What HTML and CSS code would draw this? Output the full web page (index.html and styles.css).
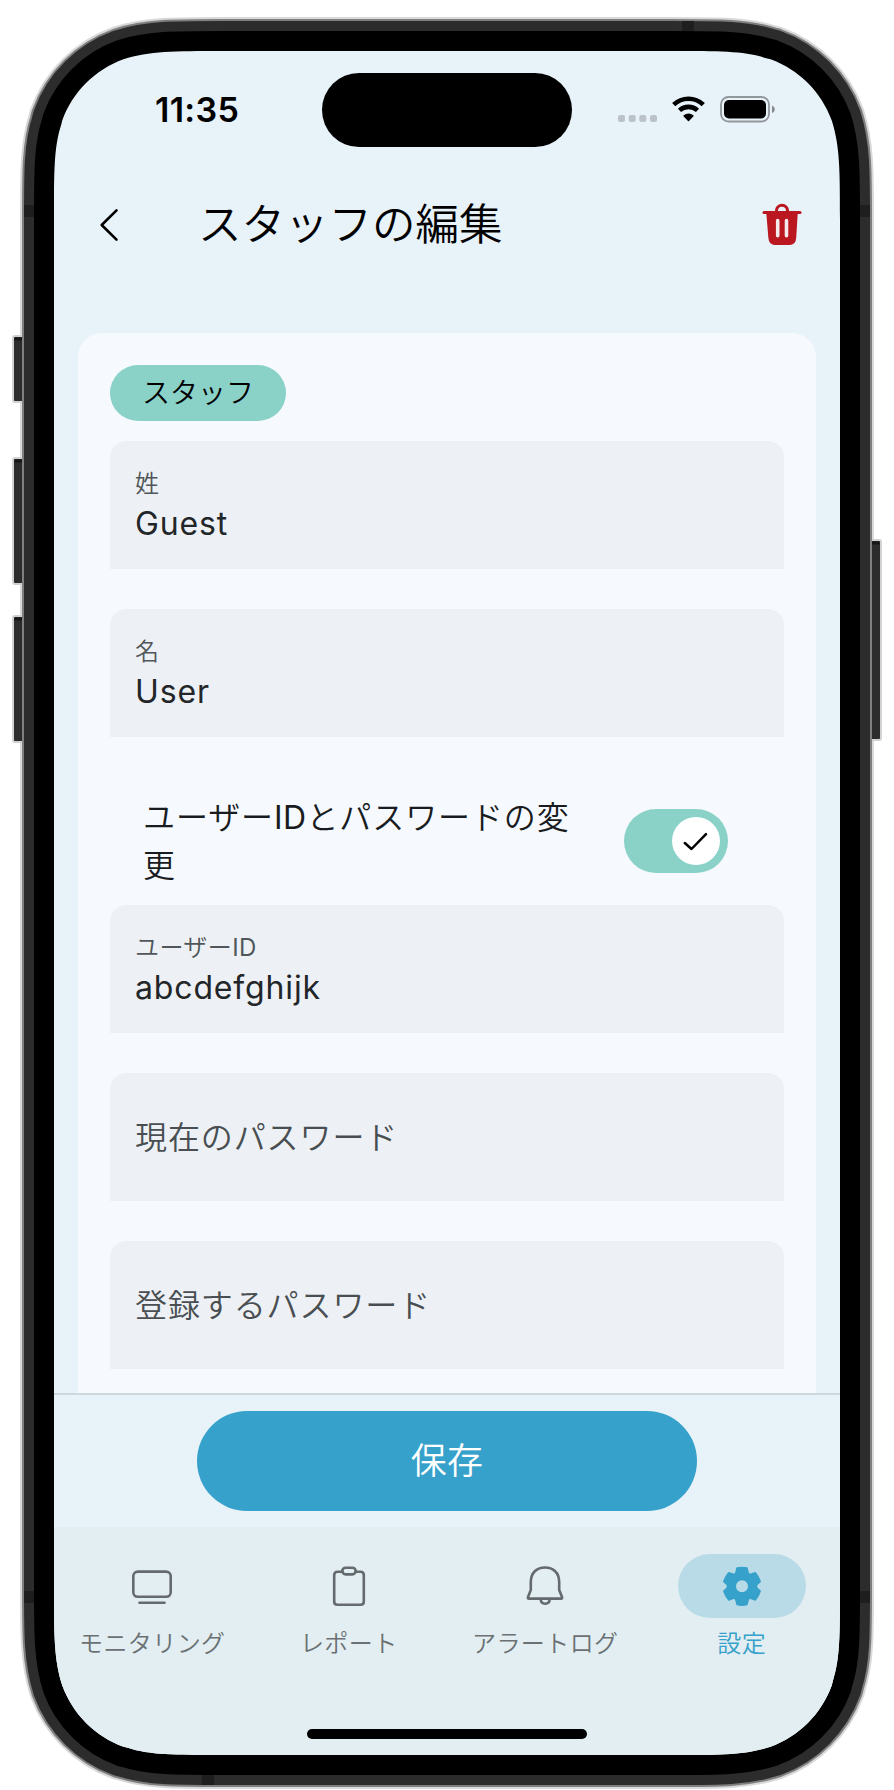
FILE: index.html
```html
<!DOCTYPE html>
<html lang="ja">
<head>
<meta charset="utf-8">
<title>スタッフの編集</title>
<link rel="stylesheet" href="styles.css">
</head>
<body>
<div class="device">
  <svg class="frame" viewBox="0 0 894 1790" aria-hidden="true">
    <defs>
      <path id="outline" transform="translate(54 51)" d="M168.15 0H617.85C666.27 0 690.48 0 712.31 7.2L716.54 8.24C744.99 18.6 767.4 41.01 777.76 69.46C786 95.52 786 119.73 786 168.15V1535.85C786 1584.27 786 1608.48 778.8 1630.31L777.76 1634.54C767.4 1662.99 744.99 1685.4 716.54 1695.76C690.48 1704 666.27 1704 617.85 1704H168.15C119.73 1704 95.52 1704 73.69 1696.8L69.46 1695.76C41.01 1685.4 18.6 1662.99 8.24 1634.54C0 1608.48 0 1584.27 0 1535.85V168.15C0 119.73 0 95.52 7.2 73.69L8.24 69.46C18.6 41.01 41.01 18.6 69.46 8.24C95.52 0 119.73 0 168.15 0Z"/>
    </defs>
    <use href="#outline" stroke="#d9d9d9" stroke-width="68" class="ring"/>
    <g class="frame-key">
      <rect x="13" y="336" width="14" height="66" rx="2"/>
      <rect x="13" y="458" width="14" height="126" rx="2"/>
      <rect x="13" y="616" width="14" height="126" rx="2"/>
      <rect x="867" y="540" width="14" height="200" rx="2"/>
    </g>
    <g class="frame-key-shade">
      <path d="M14.500 339H22M14.500 461H22M14.500 619H22M872 543H879.500"/>
    </g>
    <use href="#outline" stroke="#7f7f7f" stroke-width="64" class="ring"/>
    <use href="#outline" stroke="#2c2c2c" stroke-width="60" class="ring"/>
    <g fill="#1e1e1e">
      <rect x="682" y="21" width="12" height="12"/>
      <rect x="202" y="1773" width="12" height="12"/>
      <rect x="24" y="205" width="12" height="12"/>
      <rect x="858" y="205" width="12" height="12"/>
      <rect x="24" y="1591" width="12" height="12"/>
      <rect x="858" y="1591" width="12" height="12"/>
    </g>
    <use href="#outline" stroke="#000" stroke-width="40" fill="#000"/>
  </svg>

  <div class="screen">
    <div class="status">
      <span class="time">11:35</span>
      <span class="island"></span>
      <svg class="status-icons" width="160" height="30" viewBox="0 0 160 30">
        <g fill="#bcc2ca">
          <rect x="1" y="20" width="7" height="7" rx="2"/>
          <rect x="11.700" y="20" width="7" height="7" rx="2"/>
          <rect x="22.300" y="20" width="7" height="7" rx="2"/>
          <rect x="33" y="20" width="7" height="7" rx="2"/>
        </g>
        <g fill="none" stroke="#000">
          <path stroke-width="4.600" d="M56.700 9.600A21.500 21.500 0 0 1 86.300 9.600"/>
          <path stroke-width="4.600" d="M62.500 15.400A13.300 13.300 0 0 1 80.500 15.400"/>
        </g>
        <path d="M66.400 20.600Q71.500 16.600 76.600 20.600Q76.700 21.100 76.300 21.500L72 26Q71.500 26.400 71 26L66.700 21.500Q66.300 21.100 66.400 20.600Z"/>
        <rect x="104" y="2" width="48" height="24.500" rx="7.500" fill="none" stroke="#92979b" stroke-width="1.800"/>
        <rect x="107" y="5.100" width="42" height="18.300" rx="5"/>
        <path fill="#868a8e" d="M155 10.500Q157.800 11.500 157.800 14.200T155 18Z"/>
      </svg>
    </div>

    <header class="appbar">
      <svg class="back" width="24" height="36" viewBox="0 0 24 36"><path d="M20.500 3.300L5.700 18L20.500 32.700"/></svg>
      <h1 class="title">スタッフの編集</h1>
      <svg class="trash" width="40" height="42" viewBox="0 0 40 42">
        <g fill="none" stroke="#bb1720" stroke-linecap="round">
          <path stroke-width="3" d="M14.500 9V7.500A5.500 5.300 0 0 1 25.500 7.500V9"/>
          <path stroke-width="3" d="M2 9.500H38"/>
        </g>
        <path fill="#bb1720" d="M4.200 9H35.800L34.200 35Q33.700 42 27.500 42H13Q7 42 6.400 35Z"/>
        <path fill="none" stroke="#f5e9ee" stroke-width="3.600" stroke-linecap="round" d="M15.700 17.500V32.700M24.500 17.500V32.700"/>
      </svg>
    </header>

    <main class="content">
      <section class="card">
        <span class="chip">スタッフ</span>
        <div class="field"><span class="label">姓</span><span class="value">Guest</span></div>
        <div class="field"><span class="label">名</span><span class="value">User</span></div>
        <div class="switch-row">
          <span class="switch-text">ユーザー<span class="latin">ID</span>とパスワードの変<br>更</span>
          <span class="switch"><span class="knob"><svg width="48" height="48" viewBox="0 0 48 48"><path d="M12.800 26L19.500 32L34 17.200"/></svg></span></span>
        </div>
        <div class="field"><span class="label">ユーザー<span class="latin">ID</span></span><span class="value">abcdefghijk</span></div>
        <div class="field"><span class="placeholder">現在のパスワード</span></div>
        <div class="field"><span class="placeholder">登録するパスワード</span></div>
      </section>
    </main>

    <div class="actions"><button class="save">保存</button></div>

    <nav class="tabs">
      <div class="tab">
        <span class="tab-icon"><svg width="48" height="48" viewBox="0 0 48 48">
          <rect x="5.300" y="9.600" width="37.400" height="25.200" rx="4.500"/><path d="M11.500 40.800H36.500"/></svg></span>
        <span class="tab-label">モニタリング</span>
      </div>
      <div class="tab">
        <span class="tab-icon"><svg width="48" height="48" viewBox="0 0 48 48">
          <path d="M17.500 9.800H12.500Q9.200 9.800 9.200 13V39.500Q9.200 42.800 12.500 42.800H35.500Q38.800 42.800 38.800 39.500V13Q38.800 9.800 35.500 9.800H30.500"/><rect x="17.300" y="5.700" width="13.400" height="6.700" rx="3.300"/></svg></span>
        <span class="tab-label">レポート</span>
      </div>
      <div class="tab">
        <span class="tab-icon"><svg width="48" height="48" viewBox="0 0 48 48">
          <path d="M9.800 20Q9.800 13 13.800 9.200Q17.800 5.500 24 5.500T34.200 9.200Q38.200 13 38.200 20V28L41 35Q41.500 36.600 40 36.600H8Q6.500 36.600 7 35L9.800 28Z"/><path d="M19.700 37Q19.800 41.700 24.200 41.700T28.700 37"/></svg></span>
        <span class="tab-label">アラートログ</span>
      </div>
      <div class="tab tab-active">
        <span class="tab-icon"><svg width="48" height="48" viewBox="-72 -73 144 144">
          <path fill-rule="evenodd" d="M-15 -55Q0 -59 15 -55L18 -43Q20 -34 28 -37L40 -41Q50 -30 55 -14.500L46 -6Q40 0 46 6L55 14.500Q50 30 40 41L28 37Q20 34 18 43L15 55Q0 59 -15 55L-18 43Q-20 34 -28 37L-40 41Q-50 30 -55 14.500L-46 6Q-40 0 -46 -6L-55 -14.500Q-50 -30 -40 -41L-28 -37Q-20 -34 -18 -43ZM0 -20A20 20 0 1 0 0 20A20 20 0 1 0 0 -20Z"/></svg></span>
        <span class="tab-label">設定</span>
      </div>
      <span class="home-indicator"></span>
    </nav>
  </div>
</div>
</body>
</html>
```
FILE: styles.css
```css
* { box-sizing: border-box; }

body {
  margin: 0;
  background: #fff;
  font-family: Inter, "Noto Sans CJK JP", sans-serif;
  font-weight: 400;
}

.device {
  position: relative;
  width: 894px;
  height: 1790px;
  padding: 51px 54px 35px;
  overflow: hidden;
}

.frame {
  position: absolute;
  inset: 0;
  width: 894px;
  height: 1790px;
}
.ring { fill: none; }
.frame-key rect { fill: #2c2c2c; stroke: #d2d2d2; stroke-width: 2; }
.frame-key-shade path { stroke: #171717; stroke-width: 3; }

.screen {
  position: relative;
  display: flex;
  flex-direction: column;
  width: 786px;
  height: 1704px;
  background: #e7f2f9;
  clip-path: path("M168.15 0H617.85C666.27 0 690.48 0 712.31 7.2L716.54 8.24C744.99 18.6 767.4 41.01 777.76 69.46C786 95.52 786 119.73 786 168.15V1535.85C786 1584.27 786 1608.48 778.8 1630.31L777.76 1634.54C767.4 1662.99 744.99 1685.4 716.54 1695.76C690.48 1704 666.27 1704 617.85 1704H168.15C119.73 1704 95.52 1704 73.69 1696.8L69.46 1695.76C41.01 1685.4 18.6 1662.99 8.24 1634.54C0 1608.48 0 1584.27 0 1535.85V168.15C0 119.73 0 95.52 7.2 73.69L8.24 69.46C18.6 41.01 41.01 18.6 69.46 8.24C95.52 0 119.73 0 168.15 0Z");
}

.status {
  display: grid;
  grid-template-columns: 268px 250px 268px;
  height: 118px;
  padding-top: 22px;
  align-items: start;
}
.time {
  padding-left: 101px;
  padding-top: 16px;
  font-size: 34px;
  line-height: 42px;
  font-weight: 600;
  letter-spacing: 0.3px;
  color: #000;
}
.island { height: 74px; border-radius: 37px; background: #000; }
.status-icons { margin: 22px 0 0 45px; }

.appbar {
  display: flex;
  align-items: center;
  height: 112px;
  padding: 0 38px 0 42px;
}
.back path { fill: none; stroke: #000; stroke-width: 2.6; stroke-linecap: round; stroke-linejoin: round; }
.trash { margin-bottom: 2px; }
.title {
  flex: 1;
  margin: 0 0 2px;
  padding-left: 78px;
  font-size: 43.5px;
  line-height: 56px;
  font-weight: 350;
  color: #000;
}

.content { flex: 1; min-height: 0; padding: 52px 24px 0; overflow: hidden; }
.card {
  display: flex;
  flex-direction: column;
  height: 1100px;
  padding: 32px 32px 0;
  border-radius: 24px 24px 0 0;
  background: #f6fafe;
}
.chip {
  align-self: flex-start;
  width: 176px;
  height: 56px;
  margin-bottom: 20px;
  border-radius: 28px;
  background: #8ad1c8;
  color: #000;
  font-size: 28px;
  line-height: 56px;
  font-weight: 350;
  text-align: center;
}
.field {
  display: flex;
  flex-direction: column;
  justify-content: center;
  flex: none;
  height: 128px;
  margin-bottom: 40px;
  padding: 4px 25px 0;
  border-radius: 16px 16px 0 0;
  background: #edf1f5;
}
.label { margin-top: 2px; font-size: 24px; line-height: 32px; font-weight: 350; letter-spacing: 0.4px; color: #505659; }
.latin { font-weight: 400; letter-spacing: 0.4px; }
.value { font-size: 32px; line-height: 48px; letter-spacing: 0.85px; color: #222629; }
.placeholder { margin-bottom: 3px; font-size: 32px; line-height: 48px; font-weight: 350; letter-spacing: 0.9px; color: #484e51; }

.switch-row {
  display: flex;
  flex: none;
  align-items: center;
  justify-content: space-between;
  height: 128px;
  padding: 0 56px 0 33px;
}
.switch-text { width: 440px; padding-top: 1px; font-size: 32px; line-height: 48px; font-weight: 350; letter-spacing: 0.9px; color: #191c1e; }
.switch {
  display: flex;
  justify-content: flex-end;
  width: 104px;
  height: 64px;
  padding: 8px;
  border-radius: 32px;
  background: #8ad1c8;
}
.knob { width: 48px; height: 48px; border-radius: 50%; background: #fff; }
.knob svg { display: block; }
.knob path { fill: none; stroke: #000; stroke-width: 2.5; stroke-linecap: round; stroke-linejoin: round; }

.actions {
  display: flex;
  justify-content: center;
  height: 134px;
  padding-top: 16px;
  border-top: 2px solid #cdd8dd;
}
.save {
  width: 500px;
  height: 100px;
  padding: 0;
  border: 0;
  border-radius: 50px;
  background: #36a1ca;
  color: #fff;
  font: 350 36px/48px Inter, "Noto Sans CJK JP", sans-serif;
  letter-spacing: 0.2px;
}

.tabs {
  position: relative;
  display: grid;
  grid-template-columns: repeat(4, 1fr);
  height: 228px;
  padding-top: 27px;
  background: #e2eef2;
}
.tab { display: flex; flex-direction: column; align-items: center; color: #6b7173; }
.tab-icon {
  display: flex;
  align-items: center;
  justify-content: center;
  width: 128px;
  height: 64px;
  border-radius: 32px;
}
.tab-icon svg { fill: none; stroke: #646a6d; stroke-width: 2.6; stroke-linecap: round; stroke-linejoin: round; }
.tab-label { margin-top: 10px; font-size: 24px; line-height: 32px; font-weight: 350; letter-spacing: 0.4px; white-space: nowrap; }
.tab-active { color: #36a1ca; }
.tab-active .tab-icon { background: #b9dbe7; }
.tab-active svg { fill: #36a1ca; stroke: #36a1ca; stroke-width: 4; }

.home-indicator {
  position: absolute;
  left: 253px;
  bottom: 16px;
  width: 280px;
  height: 10px;
  border-radius: 5px;
  background: #000;
}
```
